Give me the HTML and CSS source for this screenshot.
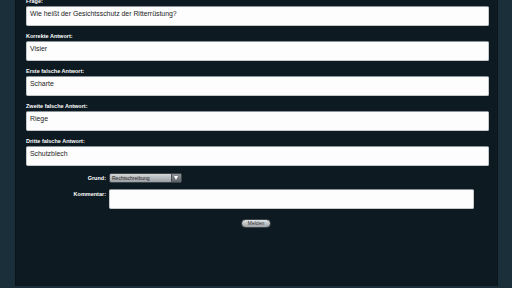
FILE: index.html
```html
<!DOCTYPE html>
<html lang="de">
<head>
  <meta charset="UTF-8">
  <meta name="viewport" content="width=device-width, initial-scale=1.0">
  <title>Frage melden</title>
  <link rel="stylesheet" href="styles.css">
</head>
<body>
  <div class="panel">
    <form class="report-form">
      <div class="field">
        <label>Frage:</label>
        <textarea class="box">Wie heißt der Gesichtsschutz der Ritterrüstung?</textarea>
      </div>
      <div class="field">
        <label>Korrekte Antwort:</label>
        <textarea class="box">Visier</textarea>
      </div>
      <div class="field">
        <label>Erste falsche Antwort:</label>
        <textarea class="box">Scharte</textarea>
      </div>
      <div class="field">
        <label>Zweite falsche Antwort:</label>
        <textarea class="box">Riege</textarea>
      </div>
      <div class="field">
        <label>Dritte falsche Antwort:</label>
        <textarea class="box">Schutzblech</textarea>
      </div>

      <div class="report-grid">
        <label class="side-label">Grund:</label>
        <div class="select">
          <span class="select-text">Rechtschreibung</span>
          <span class="select-arrow"></span>
        </div>
        <label class="side-label">Kommentar:</label>
        <textarea class="box comment"></textarea>
      </div>

      <div class="actions">
        <button type="submit" class="btn">Melden</button>
      </div>
    </form>
  </div>
</body>
</html>
```

FILE: styles.css
```css
html, body {
  height: 100%;
}
body {
  margin: 0;
  background-color: #1a2f3a;
  font-family: "Liberation Sans", Arial, sans-serif;
  overflow: hidden;
}
.panel {
  margin-left: 15px;
  width: 463px;
  height: 100%;
  background-color: #0d1a22;
  border-left: 1px solid #0a1419;
  border-right: 1px solid #0a1419;
  padding: 0 8px 0 10px;
}
.report-form {
  margin-top: -2px;
}
.field {
  margin-bottom: 7px;
}
.field label {
  display: block;
  color: #fff;
  font-size: 5.5px;
  font-weight: bold;
  line-height: 7px;
  margin-bottom: 1px;
}
.box {
  display: block;
  box-sizing: border-box;
  width: 463px;
  height: 20px;
  margin: 0;
  padding: 3px 3px 2px;
  resize: none;
  overflow: hidden;
  background-color: #fdfdfd;
  border: 1px solid #c4c9cc;
  border-top-color: #8c9499;
  border-radius: 2px;
  font-family: "Liberation Sans", Arial, sans-serif;
  font-size: 6.9px;
  line-height: 8px;
  color: #222;
}
.report-grid {
  display: grid;
  grid-template-columns: 80px auto;
  column-gap: 3px;
  row-gap: 6px;
  margin-top: 2px;
  justify-items: start;
}
.side-label {
  justify-self: end;
  color: #fff;
  font-size: 5.5px;
  font-weight: bold;
  line-height: 10px;
}
.select {
  display: flex;
  width: 73px;
  height: 10px;
  box-sizing: border-box;
  border: 1px solid #3a444a;
  border-radius: 2px;
  overflow: hidden;
  background: linear-gradient(#d4d6d8, #9a9fa3);
}
.select-text {
  flex: 1;
  padding-left: 2px;
  font-size: 5px;
  line-height: 8px;
  color: #222;
}
.select-arrow {
  position: relative;
  width: 9px;
  background: linear-gradient(#8d9398, #5c6267);
  border-left: 1px solid #4a5156;
}
.select-arrow::after {
  content: "";
  position: absolute;
  left: 2px;
  top: 2px;
  border-left: 2.5px solid transparent;
  border-right: 2.5px solid transparent;
  border-top: 4px solid #fff;
}
.comment {
  width: 365px;
}
.actions {
  display: flex;
  justify-content: center;
  margin-top: 10px;
  padding-right: 3px;
}
.btn {
  width: 30px;
  height: 9px;
  padding: 0;
  border: 1px solid #3b4347;
  border-radius: 5px;
  background: linear-gradient(#e2e4e5, #9da2a5);
  font-family: "Liberation Sans", Arial, sans-serif;
  font-size: 5px;
  line-height: 7px;
  color: #333;
}
```
